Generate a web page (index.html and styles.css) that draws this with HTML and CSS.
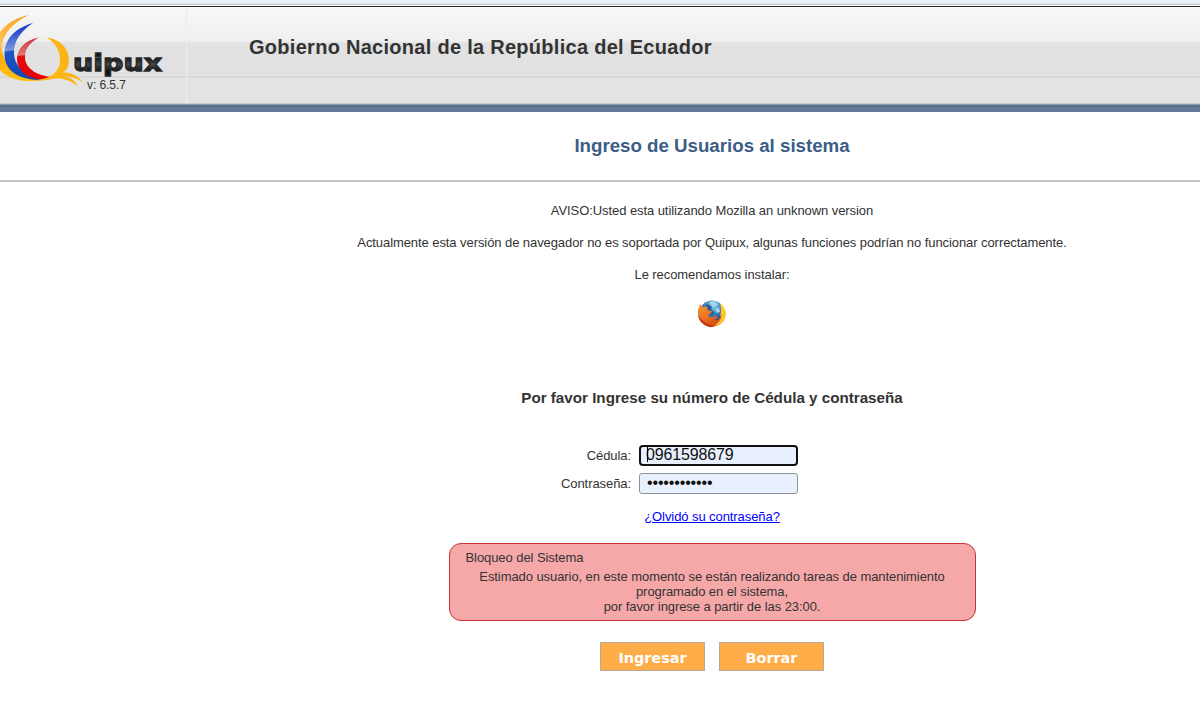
FILE: index.html
```
<!DOCTYPE html>
<html lang="es">
<head>
    <meta charset="UTF-8">
    <title>Quipux</title>
    <link rel="stylesheet" href="styles.css">
</head>
<body>
    <div class="top-strip"></div>
    <header class="header">
        <div class="logo-cell">
            <svg class="logo" width="186" height="66" viewBox="0 8 186 66">
                <defs>
                    <linearGradient id="gold" x1="0" y1="0" x2="0" y2="1">
                        <stop offset="0" stop-color="#f9a51f"/>
                        <stop offset="0.45" stop-color="#ffc45c"/>
                        <stop offset="0.6" stop-color="#fbad10"/>
                        <stop offset="1" stop-color="#ffc20e"/>
                    </linearGradient>
                    <linearGradient id="blue" x1="0" y1="0" x2="0.1" y2="1">
                        <stop offset="0" stop-color="#1836c4"/>
                        <stop offset="0.15" stop-color="#2448cc"/>
                        <stop offset="0.48" stop-color="#7c98df"/>
                        <stop offset="0.51" stop-color="#1c56c8"/>
                        <stop offset="1" stop-color="#1247b8"/>
                    </linearGradient>
                    <linearGradient id="red" x1="0" y1="0" x2="0.1" y2="1">
                        <stop offset="0" stop-color="#c92f35"/>
                        <stop offset="0.42" stop-color="#df777b"/>
                        <stop offset="0.45" stop-color="#e30b10"/>
                        <stop offset="1" stop-color="#e60000"/>
                    </linearGradient>
                    <linearGradient id="ink" x1="0" y1="0" x2="0" y2="1">
                        <stop offset="0.3" stop-color="#111"/>
                        <stop offset="0.55" stop-color="#4a4a4a"/>
                        <stop offset="0.8" stop-color="#111"/>
                    </linearGradient>
                </defs>
                <path fill="url(#gold)" d="M29 15C12 18-3 29-6 48C-9 68 6 81 30 81L47 79C24 79 4 68 2 50C1 34 14 22 29 15Z"/>
                <path fill="url(#blue)" d="M33 23C18 27 5 37 4.500 53C4 70 17 79 38 80L48 79C27 77 15 68 14 54C13 41 22 30 33 23Z"/>
                <path fill="url(#red)" d="M39 37.500C25 40 17 49 17 59C17 71 28 79 43 79.500Q51 80 56 77C38 77 25 69 25 57C25 48 31 42 39 37.500Z"/>
                <path fill="#fdb515" d="M47 37.500C60 39 69 49 69 60C69 67 66 71 62 73C70 71 78 76 82.500 82C76 78 70 76 63 76C70 77 75 80 78 86.500C70 80 61 77.500 52 79C46 80 38 81.500 30 80.500C48 80 60 74 60 60C60 50 55 43 47 37.500Z"/>
                <text class="logo-text" x="73" y="71" textLength="89" lengthAdjust="spacingAndGlyphs">uipux</text>
            </svg>
            <span class="version">v: 6.5.7</span>
        </div>
        <h1 class="header-title">Gobierno Nacional de la República del Ecuador</h1>
    </header>
    <div class="blue-bar"></div>

    <h2 class="page-title">Ingreso de Usuarios al sistema</h2>

    <main class="page">
        <section class="notice">
            <p class="browser">AVISO:Usted esta utilizando Mozilla an unknown version</p>
            <p class="support">Actualmente esta versión de navegador no es soportada por Quipux, algunas funciones podrían no funcionar correctamente.</p>
            <p class="recommend">Le recomendamos instalar:</p>
            <svg class="firefox" width="30" height="28" viewBox="0 0 30 28">
                <defs>
                    <radialGradient id="globe" cx="0.55" cy="0.2" r="0.7">
                        <stop offset="0" stop-color="#8fd0f0"/>
                        <stop offset="0.5" stop-color="#3a7fbd"/>
                        <stop offset="1" stop-color="#123a78"/>
                    </radialGradient>
                    <linearGradient id="fox" x1="0" y1="0" x2="0.7" y2="1">
                        <stop offset="0" stop-color="#f39a35"/>
                        <stop offset="0.5" stop-color="#ec7420"/>
                        <stop offset="1" stop-color="#d24512"/>
                    </linearGradient>
                </defs>
                <circle cx="15" cy="13" r="12.500" fill="url(#globe)"/>
                <path fill="#a5d6ec" d="M12 2L17 1L21 4L18 7L14 5ZM18 9L22 8L23 12L20 13Z"/>
                <path fill="#255a91" d="M9 4L12 5L15 7L14 9L17 12L16 15L12 14L10 8Z"/>
                <path fill="url(#fox)" d="M3 4L6 7Q9 6 11 8L10 10L15 11Q15 13 11 15Q12 18 16 17Q19 15 21 17Q19 20 17 20Q22 21 24 16L26 10L28 13Q29 21 22 25Q14 29 7 24Q0 19 1 10Z"/>
                <path fill="#ffc928" d="M23 3Q29 8 29 15Q27 25 17 26Q24 22 25 14L23 17Q25 9 23 3Z"/>
                <path fill="#c2380f" d="M1 15Q6 24 18 26Q12 29 6 24Q2 21 1 15Z"/>
            </svg>
        </section>

        <h3 class="form-title">Por favor Ingrese su número de Cédula y contraseña</h3>

        <form class="login-form">
            <label for="cedula">Cédula:</label>
            <div class="field focused"><span class="caret"></span><input type="text" id="cedula" value="0961598679"></div>
            <label for="password">Contraseña:</label>
            <div class="field"><input type="password" id="password" value="abcdefghijkl"></div>
        </form>
        <a class="forgot" href="#">¿Olvidó su contraseña?</a>

        <div class="alert">
            <div class="alert-title">Bloqueo del Sistema</div>
            <div class="alert-text">Estimado usuario, en este momento se están realizando tareas de mantenimiento<br>programado en el sistema,<br>por favor ingrese a partir de las 23:00.</div>
        </div>

        <div class="buttons">
            <button type="button">Ingresar</button>
            <button type="button">Borrar</button>
        </div>
    </main>
</body>
</html>
```
FILE: styles.css
```
* {
    box-sizing: border-box;
}

body {
    margin: 0;
    background: #fff;
    color: #333;
    font-family: Arial, "Liberation Sans", sans-serif;
    font-size: 13px;
    line-height: 15px;
    letter-spacing: -0.075px;
    overflow: hidden;
}

h1, h2, h3, p {
    margin: 0;
    white-space: nowrap;
}

.top-strip {
    height: 8px;
    background: linear-gradient(#eaf1fb 0 3px, #e1e6ed 3px 4px, #c4c7cc 4px 5px, #fff 5px 6px, #222 6px 7px, #fff 7px);
}

.header {
    display: flex;
    height: 96px;
    background: linear-gradient(#f7f7f7 0, #efefef 33px, #e2e2e2 35px, #e2e2e2 68px, #d8d8d8 68px, #d8d8d8 70px, #e4e4e4 70px, #e3e3e3 95px, #ccc 95px);
}

.logo-cell {
    width: 187px;
    border-right: 1px solid #ececec;
}

.logo {
    display: block;
    overflow: visible;
}

.logo-text {
    font: bold 22.500px "DejaVu Sans", Verdana, sans-serif;
    letter-spacing: 0;
    fill: url(#ink);
    stroke: #2a2a2a;
    stroke-width: 1.3px;
}

.version {
    display: block;
    margin-top: 4px;
    padding-left: 87px;
    font-size: 12px;
}

.header-title {
    padding: 27px 0 0 62px;
    font-size: 20px;
    line-height: 24px;
    letter-spacing: 0.28px;
}

.blue-bar {
    height: 8px;
    background: linear-gradient(#8f9ba8 0 1px, #566f8e 1px 2px, #59718f 3px, #647b9a 4px, #647b9a);
}

/* Content sits right of the empty side column */
.page-title,
.page {
    padding-left: 224px;
}

.page {
    display: flex;
    flex-direction: column;
    align-items: center;
}

.page-title {
    height: 70px;
    padding-top: 22px;
    border-bottom: 2px solid #c3c3c3;
    color: #3c5d85;
    font-size: 18.700px;
    line-height: 24px;
    letter-spacing: 0;
    text-align: center;
}

.notice {
    display: flex;
    flex-direction: column;
    align-items: center;
    gap: 17px;
    padding-top: 21px;
}

.firefox {
    display: block;
    margin-top: 1px;
}

.form-title {
    margin-top: 60px;
    font-size: 15.200px;
    line-height: 20px;
    letter-spacing: 0;
}

.login-form {
    display: grid;
    grid-template-columns: 110px 159px;
    column-gap: 8px;
    row-gap: 7px;
    align-items: center;
    margin-top: 37px;
    margin-right: 105px;
}

.login-form label {
    text-align: right;
}

.field {
    position: relative;
    height: 21px;
    border: 1px solid #8d929b;
    border-radius: 3px;
    background: #e8f0fe;
}

.field input {
    display: block;
    width: 100%;
    height: 17px;
    padding: 0 7px;
    border: none;
    outline: none;
    background: transparent;
    color: #111;
    font: 16px/17px Arial, "Liberation Sans", sans-serif;
    letter-spacing: -0.15px;
}

.focused {
    border: 2px solid #101010;
    border-radius: 4px;
}

.focused input {
    height: 15px;
    padding: 0 5px;
    line-height: 15px;
}

.caret {
    position: absolute;
    top: 0;
    left: 6px;
    width: 1px;
    height: 15px;
    background: #000;
}

.forgot {
    margin-top: 15px;
    color: #00f;
}

.alert {
    width: 527px;
    height: 78px;
    margin-top: 19px;
    padding: 6px 16px;
    border: 1px solid #c8343a;
    border-radius: 12px;
    background: #f6a8a9;
}

.alert-text {
    margin-top: 4px;
    text-align: center;
    white-space: nowrap;
}

.buttons {
    display: flex;
    gap: 14px;
    margin-top: 21px;
}

.buttons button {
    width: 105px;
    height: 29px;
    padding: 2px 0 0;
    border: 1px solid #b5a99a;
    background: #ffad48;
    color: #fff;
    font: bold 14.400px "DejaVu Sans", Verdana, sans-serif;
}
```
